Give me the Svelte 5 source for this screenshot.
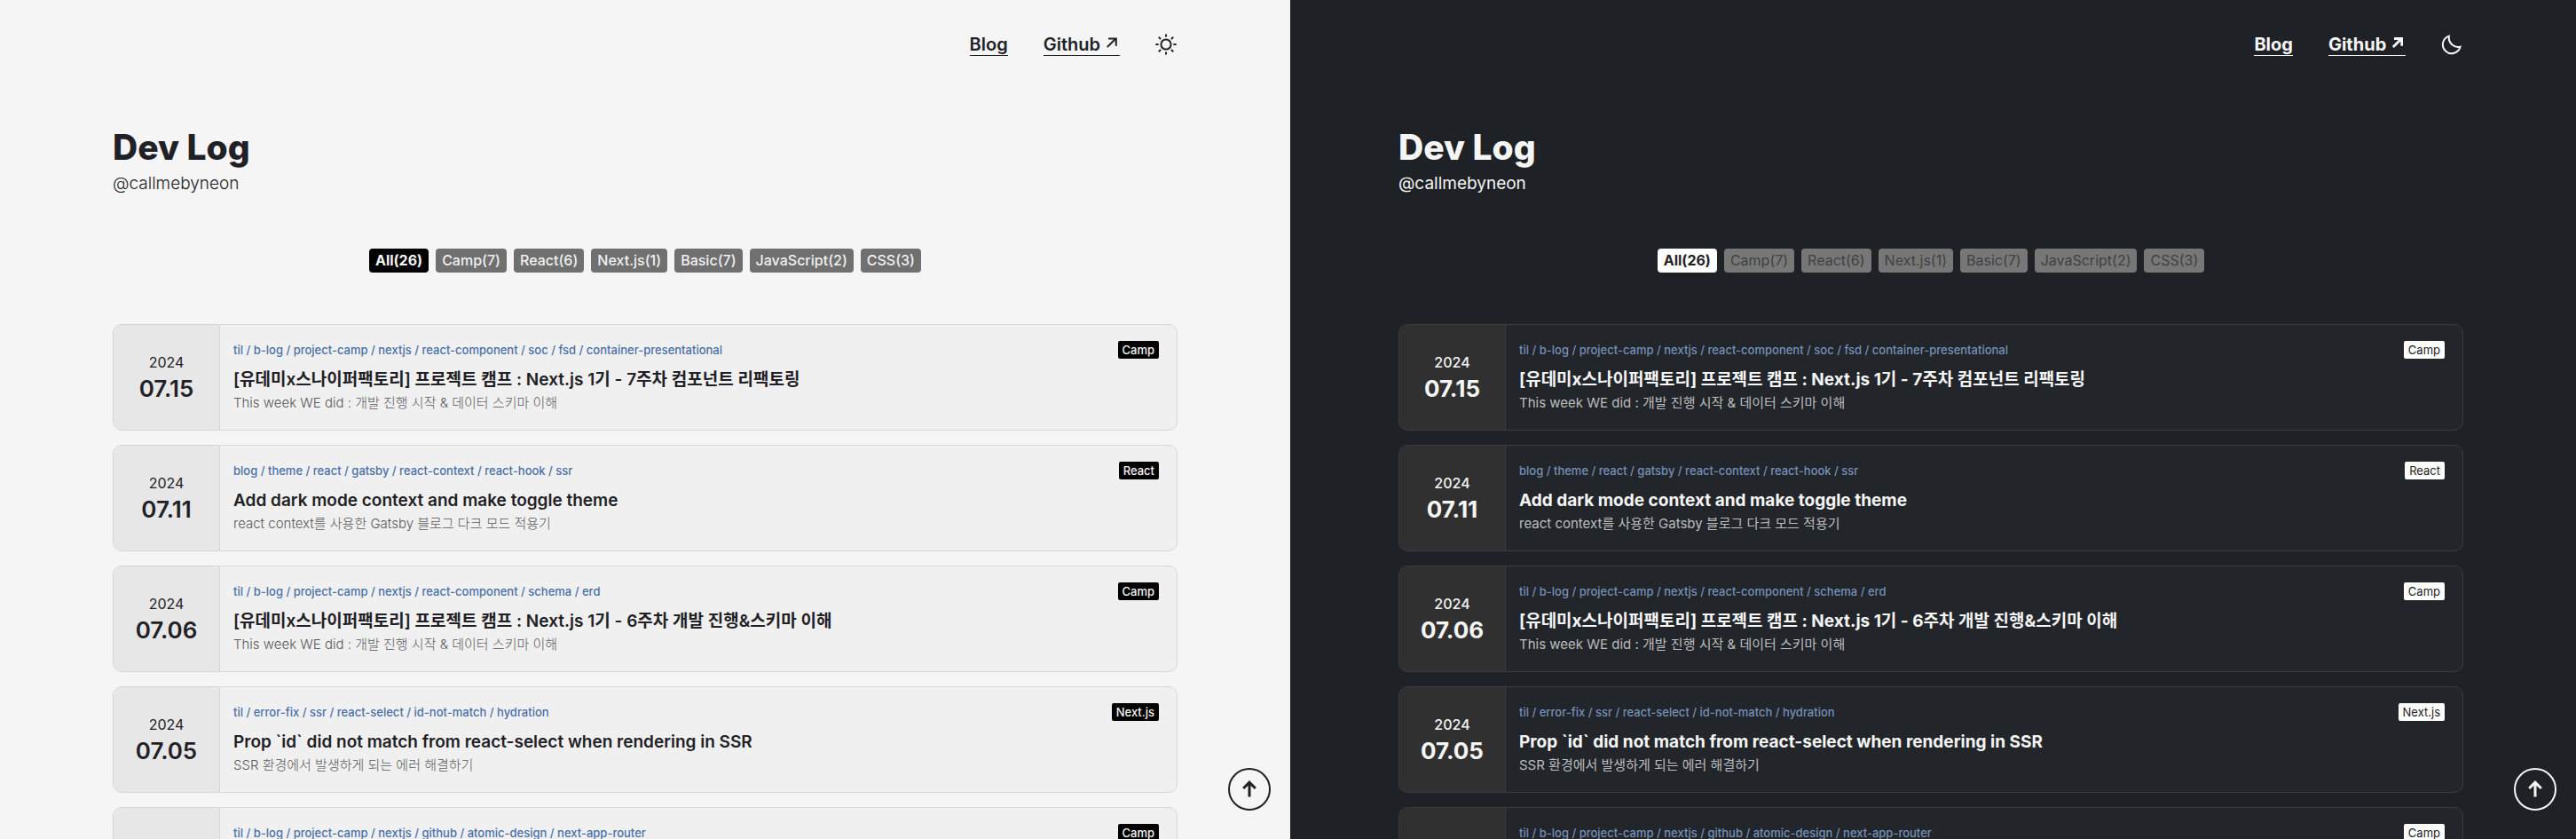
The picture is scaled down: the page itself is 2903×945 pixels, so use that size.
<script>
  const themes = ['light', 'dark'];

  const filters = ['All(26)', 'Camp(7)', 'React(6)', 'Next.js(1)', 'Basic(7)', 'JavaScript(2)', 'CSS(3)'];

  const posts = [
    {
      day: '07.15',
      category: 'Camp',
      tags: ['til', 'b-log', 'project-camp', 'nextjs', 'react-component', 'soc', 'fsd', 'container-presentational'],
      title: '[유데미x스나이퍼팩토리] 프로젝트 캠프 : Next.js 1기 - 7주차 컴포넌트 리팩토링',
      summary: 'This week WE did : 개발 진행 시작 & 데이터 스키마 이해'
    },
    {
      day: '07.11',
      category: 'React',
      tags: ['blog', 'theme', 'react', 'gatsby', 'react-context', 'react-hook', 'ssr'],
      title: 'Add dark mode context and make toggle theme',
      summary: 'react context를 사용한 Gatsby 블로그 다크 모드 적용기'
    },
    {
      day: '07.06',
      category: 'Camp',
      tags: ['til', 'b-log', 'project-camp', 'nextjs', 'react-component', 'schema', 'erd'],
      title: '[유데미x스나이퍼팩토리] 프로젝트 캠프 : Next.js 1기 - 6주차 개발 진행&스키마 이해',
      summary: 'This week WE did : 개발 진행 시작 & 데이터 스키마 이해'
    },
    {
      day: '07.05',
      category: 'Next.js',
      tags: ['til', 'error-fix', 'ssr', 'react-select', 'id-not-match', 'hydration'],
      title: 'Prop `id` did not match from react-select when rendering in SSR',
      summary: 'SSR 환경에서 발생하게 되는 에러 해결하기'
    },
    {
      category: 'Camp',
      tags: ['til', 'b-log', 'project-camp', 'nextjs', 'github', 'atomic-design', 'next-app-router']
    }
  ];

  let selected = $state({ light: 'All(26)', dark: 'All(26)' });
</script>

<div class="themes">
  {#each themes as theme}
    <div class="pane {theme}">
      <div class="container">
        <nav>
          <a href="#blog">Blog</a>
          <a href="#github">Github
            <svg class="out" viewBox="0 0 12 12" aria-hidden="true"><path d="M.8 11 10.2 1.8M2 1.5h8.8v8.3" /></svg>
          </a>
          <button class="toggle" aria-label="Toggle theme">
            {#if theme === 'light'}
              <svg viewBox="0 0 24 24" aria-hidden="true">
                <circle cx="12" cy="12" r="5.6" />
                <path d="M12 .4v3.2M12 20.4v3.2M.4 12h3.2M20.4 12h3.2M3.8 3.8l2.3 2.3M17.9 17.9l2.3 2.3M3.8 20.2l2.3-2.3M17.9 6.1l2.3-2.3" />
              </svg>
            {:else}
              <svg viewBox="0 0 24 24" aria-hidden="true">
                <path d="M8.9 2.6A10 10 0 1 0 21.6 14.6 10.4 10.4 0 0 1 8.9 2.6Z" />
              </svg>
            {/if}
          </button>
        </nav>

        <header>
          <h1>Dev Log</h1>
          <p>@callmebyneon</p>
        </header>

        <div class="filters">
          {#each filters as filter}
            <button class:active={selected[theme] === filter} onclick={() => (selected[theme] = filter)}>{filter}</button>
          {/each}
        </div>

        <main>
          {#each posts as post}
            <article>
              <div class="date">
                {#if post.day}
                  <span class="year">2024</span>
                  <span class="day">{post.day}</span>
                {/if}
              </div>
              <div class="body">
                <div class="meta">
                  <span class="tags">{post.tags.join(' / ')}</span>
                  <span class="category">{post.category}</span>
                </div>
                {#if post.title}
                  <h2>{post.title}</h2>
                  <p>{post.summary}</p>
                {/if}
              </div>
            </article>
          {/each}
        </main>
      </div>

      <button class="top" aria-label="Back to top">
        <svg viewBox="0 0 20 20" aria-hidden="true"><path d="M10 18.5V2.5M3.2 9 10 2.2 16.8 9" /></svg>
      </button>
    </div>
  {/each}
</div>

<style>
  :global(body) {
    margin: 0;
  }

  .themes {
    display: grid;
    grid-template-columns: 1454fr 1449fr;
    height: 100vh;
    overflow: hidden;
    font-family: Inter, 'Noto Sans CJK KR', sans-serif;
  }

  .pane {
    position: relative;
    min-width: 0;
    overflow: hidden;
    box-sizing: border-box;
    background: var(--bg);
    color: var(--text);
  }

  .light {
    --bg: #f5f5f5;
    --text: #1f2126;
    --card: #f0f0f0;
    --date: #e7e7e7;
    --line: #d6d6d6;
    --tags: #4a70a9;
    --muted: #58595c;
    --chip: #000;
    --chip-text: #f5f5f5;
    --chip-off: #707070;
    --chip-off-text: #f0f0f0;
    --chip-weight: 500;
    --thin: 300;
    --regular: 400;
    --bold: 600;
  }

  .dark {
    --bg: #1e2125;
    --text: #f5f5f5;
    --card: #22252a;
    --date: #303030;
    --line: #393b3f;
    --tags: #7590b8;
    --muted: #bcbdbe;
    --chip: #fff;
    --chip-text: #1f2126;
    --chip-off: #777;
    --chip-off-text: #3f4145;
    --chip-weight: 400;
    --thin: 400;
    --regular: 500;
    --bold: 700;
    padding-right: 5px;
  }

  .container {
    max-width: 1200px;
    margin: 0 auto;
  }

  button {
    margin: 0;
    padding: 0;
    border: 0;
    background: none;
    color: inherit;
    font: inherit;
    cursor: pointer;
  }

  svg {
    fill: none;
    stroke: currentColor;
  }

  nav {
    display: flex;
    align-items: center;
    justify-content: flex-end;
    gap: 40px;
    height: 100px;
  }

  nav a {
    border-bottom: 1px solid;
    color: inherit;
    font-size: 20px;
    font-weight: var(--bold);
    line-height: 24px;
    text-decoration: none;
  }

  .out {
    width: 12px;
    height: 12px;
    margin: 0 3px 0 2px;
    vertical-align: 3px;
    stroke-width: 2;
  }

  .dark .out {
    stroke-width: 3;
  }

  .toggle {
    margin-right: 1px;
  }

  .toggle svg {
    display: block;
    width: 24px;
    height: 24px;
    stroke-width: 2;
  }

  header {
    padding: 42px 0 50px;
  }

  h1,
  h2,
  p {
    margin: 0;
  }

  h1 {
    font-size: 39px;
    font-weight: 800;
    line-height: 48px;
  }

  header p {
    font-size: 19px;
    font-weight: var(--thin);
    line-height: 34px;
  }

  .filters {
    display: flex;
    justify-content: center;
    gap: 8px;
    margin: 6px 0 58px;
  }

  .filters button {
    padding: 0 7px;
    border-radius: 4px;
    background: var(--chip-off);
    color: var(--chip-off-text);
    font-size: 16px;
    font-weight: var(--chip-weight);
    line-height: 27px;
  }

  .filters .active {
    background: var(--chip);
    color: var(--chip-text);
    font-weight: 700;
  }

  main {
    display: grid;
    gap: 16px;
  }

  article {
    display: grid;
    grid-template-columns: 120px 1fr;
    box-sizing: border-box;
    min-height: 120px;
    border: 1px solid var(--line);
    border-radius: 10px;
    background: var(--card);
    overflow: hidden;
  }

  .date {
    display: flex;
    flex-direction: column;
    align-items: center;
    justify-content: center;
    padding-bottom: 3px;
    border-right: 1px solid var(--line);
    background: var(--date);
  }

  .year {
    font-size: 16px;
    font-weight: var(--regular);
    line-height: 28px;
  }

  .day {
    font-size: 26px;
    font-weight: var(--bold);
    line-height: 32px;
  }

  .body {
    padding: 18px 20px 0 15px;
  }

  .meta {
    display: flex;
    justify-content: space-between;
  }

  .tags {
    color: var(--tags);
    font-size: 13px;
    font-weight: 500;
    line-height: 20px;
  }

  .category {
    padding: 0 5px;
    border-radius: 2px;
    background: var(--chip);
    color: var(--chip-text);
    font-size: 13px;
    font-weight: var(--chip-weight);
    line-height: 20px;
  }

  h2 {
    margin-top: 10px;
    font-size: 19px;
    font-weight: var(--bold);
    line-height: 28px;
  }

  .body p {
    color: var(--muted);
    font-size: 15px;
    font-weight: var(--thin);
    line-height: 24px;
  }

  .top {
    position: absolute;
    right: 22px;
    bottom: 32px;
    display: grid;
    place-items: center;
    box-sizing: border-box;
    width: 48px;
    height: 48px;
    border: 2px solid;
    border-radius: 50%;
  }

  .top svg {
    width: 20px;
    height: 20px;
    stroke-width: 3;
  }
</style>
